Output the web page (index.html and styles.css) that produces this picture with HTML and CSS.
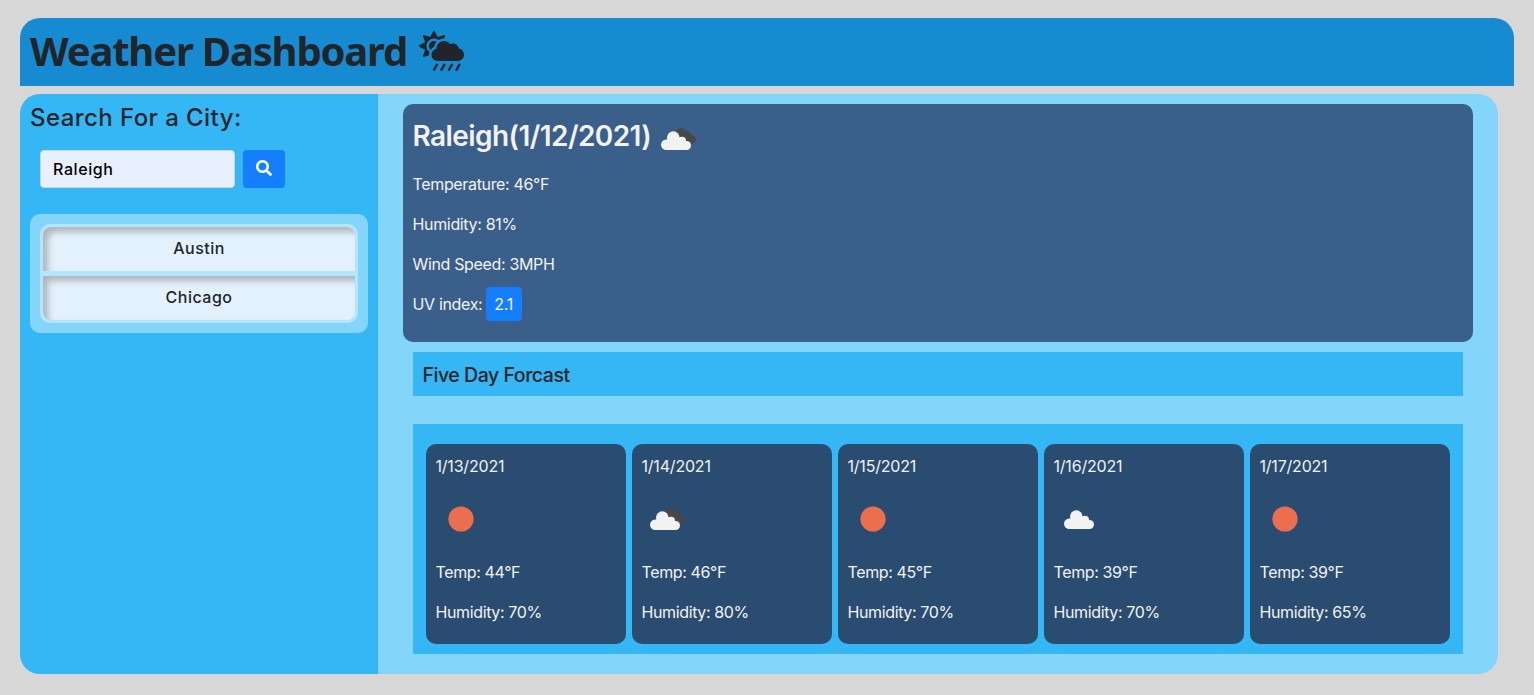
FILE: index.html
```html
<!DOCTYPE html>
<html lang="en">
<head>
<meta charset="utf-8">
<title>Weather Dashboard</title>
<link rel="stylesheet" href="styles.css">
</head>
<body>
<svg class="defs" width="0" height="0" aria-hidden="true">
  <symbol id="cloud" viewBox="0 0 36 24" overflow="visible">
    <g fill="#f2f2f2"><circle cx="5.300" cy="16.700" r="5.300"/><circle cx="12.300" cy="9.600" r="6.300"/><circle cx="21" cy="12.700" r="4"/><circle cx="25.500" cy="17.500" r="4.500"/><path d="M5.300 22V12L12 8l9 2 4.500 5v7z"/></g>
  </symbol>
  <symbol id="clouds" viewBox="0 0 36 24" overflow="visible">
    <g fill="#484848"><circle cx="20" cy="4.800" r="4.700"/><circle cx="26" cy="7.500" r="4.300"/><circle cx="31" cy="11.600" r="4"/><path d="M16 7l6-6 9 7 0 8z"/></g>
    <g fill="#f2f2f2"><circle cx="5.300" cy="16.700" r="5.300"/><circle cx="12.300" cy="9.600" r="6.300"/><circle cx="21" cy="12.700" r="4"/><circle cx="25.500" cy="17.500" r="4.500"/><path d="M5.300 22V12L12 8l9 2 4.500 5v7z"/></g>
  </symbol>
  <symbol id="sun" viewBox="0 0 36 24" overflow="visible">
    <circle cx="13" cy="11" r="12.600" fill="#eb6e4f"/>
  </symbol>
</svg>
<header class="header">
  <h1 class="title"><span class="title-text">Weather Dashboard</span>
    <svg class="title-icon" viewBox="0 0 576 512"><path fill="currentColor" d="M510.500 225.500c-6.900-37.200-39.300-65.500-78.500-65.500-12.300 0-23.900 3-34.300 8-17.400-24.100-45.600-40-77.700-40-53 0-96 43-96 96 0 .5.2 1.100.2 1.600C187.600 233 160 265.200 160 304c0 44.200 35.800 80 80 80h256c44.200 0 80-35.800 80-80 0-39.200-28.200-71.700-65.500-78.500zm-386.400 34.400c-37.400-37.400-37.400-98.300 0-135.800 34.600-34.600 89.100-36.800 126.700-7.400 20-12.900 43.600-20.700 69.200-20.700.7 0 1.300.2 2 .2l8.900-26.700c3.400-10.200-6.300-19.800-16.500-16.400l-75.300 25.100-35.500-71c-4.800-9.600-18.500-9.600-23.300 0l-35.500 71-75.300-25.100c-10.200-3.400-19.800 6.300-16.400 16.500l25.100 75.300-71 35.500c-9.600 4.800-9.600 18.500 0 23.300l71 35.500-25.100 75.300c-3.400 10.200 6.300 19.800 16.500 16.500l59.200-19.700c-.2-2.400-.7-4.700-.7-7.200 0-12.500 2.300-24.500 6.200-35.900-3.600-2.700-7.100-5.200-10.200-8.300zm69.800-58c4.300-24.500 15.800-46.400 31.900-64-9.800-6.200-21.400-9.900-33.800-9.900-35.300 0-64 28.700-64 64 0 18.700 8.200 35.400 21.100 47.100 11.300-15.900 26.600-28.900 44.800-37.200z"/><path stroke="currentColor" stroke-width="32" stroke-linecap="round" d="M516.600 432l-36.600 64M420.600 432l-36.600 64M324.600 432l-36.600 64M228.600 432l-36.600 64"/></svg>
  </h1>
</header>
<main class="main">
  <aside class="sidebar">
    <h2 class="search-title">Search For a City:</h2>
    <form class="search">
      <input class="search-input" type="text" value="Raleigh">
      <button class="search-button" type="button" aria-label="Search">
        <svg viewBox="0 0 512 512" width="16" height="16"><path fill="#fff" d="M505 442.700L405.300 343c-4.500-4.500-10.600-7-17-7H372c27.600-35.300 44-79.700 44-128C416 93.100 322.900 0 208 0S0 93.100 0 208s93.100 208 208 208c48.300 0 92.700-16.400 128-44v16.300c0 6.400 2.500 12.500 7 17l99.700 99.700c9.400 9.400 24.600 9.400 33.900 0l28.300-28.300c9.400-9.400 9.400-24.600.1-34zM208 336c-70.700 0-128-57.200-128-128 0-70.700 57.200-128 128-128 70.700 0 128 57.200 128 128 0 70.700-57.200 128-128 128z"/></svg>
      </button>
    </form>
    <div class="history">
      <ul class="cities">
        <li class="city">Austin</li>
        <li class="city">Chicago</li>
      </ul>
    </div>
  </aside>
  <div class="content">
    <section class="current">
      <h3 class="current-title"><span>Raleigh(1/12/2021)</span><svg class="weather"><use href="#clouds"/></svg></h3>
      <p class="line">Temperature: 46°F</p>
      <p class="line">Humidity: 81%</p>
      <p class="line">Wind Speed: 3MPH</p>
      <p class="line uv-line"><span>UV index:</span><span class="uv">2.1</span></p>
    </section>
    <h4 class="forecast-title">Five Day Forcast</h4>
    <section class="forecast">
      <article class="day"><p class="date">1/13/2021</p><svg class="weather sun"><use href="#sun"/></svg><p>Temp: 44°F</p><p class="humidity">Humidity: 70%</p></article>
      <article class="day"><p class="date">1/14/2021</p><svg class="weather"><use href="#clouds"/></svg><p>Temp: 46°F</p><p class="humidity">Humidity: 80%</p></article>
      <article class="day"><p class="date">1/15/2021</p><svg class="weather sun"><use href="#sun"/></svg><p>Temp: 45°F</p><p class="humidity">Humidity: 70%</p></article>
      <article class="day"><p class="date">1/16/2021</p><svg class="weather single"><use href="#cloud"/></svg><p>Temp: 39°F</p><p class="humidity">Humidity: 70%</p></article>
      <article class="day"><p class="date">1/17/2021</p><svg class="weather sun"><use href="#sun"/></svg><p>Temp: 39°F</p><p class="humidity">Humidity: 65%</p></article>
    </section>
  </div>
</main>
</body>
</html>
```
FILE: styles.css
```css
* { box-sizing: border-box; }
html { background: #d7d7d7; }
body {
  margin: 0;
  padding: 18px 20px 21px;
  color: #212529;
  font: 400 16px/24px Inter, "Liberation Sans", sans-serif;
  overflow: hidden;
}
h1, h2, h3, h4, p, ul { margin: 0; padding: 0; }
.defs { display: block; height: 0; }
.header {
  height: 68px;
  padding: 9px 10px 11px;
  background: #168bd1;
  border-radius: 20px 20px 0 0;
}
.title {
  display: flex;
  align-items: center;
  height: 48px;
  font: 700 40px/48px "Noto Sans", sans-serif;
  letter-spacing: -1.18px;
}
.title-text { width: 389px; white-space: nowrap; }
.title-icon { width: 45px; height: 40px; }
.main {
  display: flex;
  width: 1478px;
  height: 580px;
  margin-top: 8px;
  border-radius: 20px;
  background: #84d5fa;
  overflow: hidden;
}
.sidebar {
  width: 358px;
  padding: 10px;
  background: #35b7f5;
}
.search-title {
  font: 500 24px/28px Inter, sans-serif;
  letter-spacing: .43px;
}
.search {
  display: flex;
  gap: 8px;
  padding: 18px 10px 26px;
}
.search-input {
  width: 195px;
  height: 38px;
  padding: 6px 12px;
  border: 1px solid #ced4da;
  border-radius: 4px;
  background: #e8f0fe;
  color: #000;
  font: 500 16px/24px Inter, sans-serif;
  letter-spacing: .6px;
}
.search-button {
  width: 42px;
  height: 38px;
  padding: 10px 13px 12px;
  border: 0;
  border-radius: 4px;
  background: #157efb;
}
.search-button svg { display: block; }
.history {
  padding: 10px;
  border-radius: 10px;
  background: #84d5fa;
}
.cities {
  display: grid;
  gap: 5px;
  padding: 3px;
  border-radius: 10px;
  background: #b3e5fc;
  list-style: none;
}
.city {
  height: 44px;
  background: #e3f1fd;
  box-shadow: inset 5px 5px 6px #b0b5ba;
  font-weight: 500;
  line-height: 43px;
  letter-spacing: .5px;
  text-align: center;
}
.city:first-child { border-radius: 8px 8px 0 0; }
.city:last-child { border-radius: 0 0 8px 8px; }
.content {
  flex: 1;
  padding: 10px 25px 20px;
}
.current {
  height: 238px;
  padding: 15px 9.5px;
  border-radius: 10px;
  background: #395f8a;
  color: #f2f2f2;
  letter-spacing: -.34px;
}
.current-title {
  display: flex;
  align-items: center;
  gap: 10px;
  height: 34px;
  margin-bottom: 19px;
  font-size: 28px;
  font-weight: 600;
  letter-spacing: -.57px;
}
.weather {
  display: block;
  width: 36px;
  height: 24px;
  overflow: visible;
}
.current-title .weather { margin-top: 8px; }
.line { margin-bottom: 16px; }
.uv-line { display: flex; align-items: center; gap: 4px; height: 24px; }
.uv {
  width: 36px;
  padding: 5px 8px;
  border-radius: 4px;
  background: #157efb;
}
.forecast-title {
  height: 44px;
  margin: 10px 10px 28px;
  padding: 11px 9.5px 9px;
  background: #35b7f5;
  font-size: 19.5px;
  font-weight: 500;
  letter-spacing: -.46px;
}
.forecast {
  display: flex;
  justify-content: center;
  gap: 6px;
  height: 230px;
  margin: 0 10px;
  padding: 20px 0 10px;
  background: #35b7f5;
}
.day {
  width: 200px;
  padding: 10px 9.5px;
  border-radius: 10px;
  background: #294c70;
  color: #f2f2f2;
  letter-spacing: -.38px;
}
.day .date { margin-bottom: 30px; letter-spacing: -.2px; }
.day .weather { margin: 0 0 28px 8.5px; }
.day .sun { margin-left: 12.5px; }
.day .single { margin: -1px 0 29px 10.5px; }
.day .humidity { margin-top: 16px; }
```
